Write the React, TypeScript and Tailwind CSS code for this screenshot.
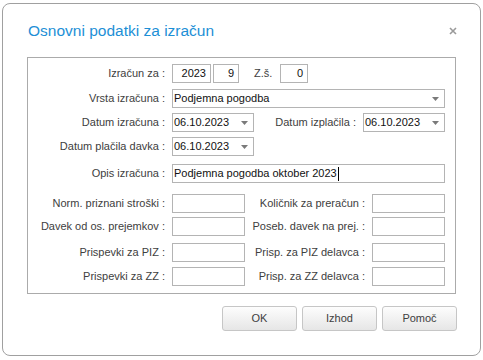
import React from "react";

const font = { fontFamily: '"Liberation Sans", Arial, sans-serif' };

function Arrow() {
  return (
    <svg width="7" height="4" viewBox="0 0 7 4" className="shrink-0">
      <path d="M0 0h7L3.5 4z" fill="#7a7a7a" />
    </svg>
  );
}

function Box(props: { w: string; value?: string; right?: boolean; caret?: boolean }) {
  return (
    <div
      className={`flex h-[19px] items-center border border-[#b4b4b4] bg-white px-[4px] text-[11px] text-[#111] ${props.w} ${props.right ? "justify-end" : "pl-[1px]"}`}
    >
      <span className="whitespace-nowrap">{props.value}</span>
      {props.caret && <span className="ml-[1px] h-[14px] w-[1px] bg-black" />}
    </div>
  );
}

function Select(props: { w: string; value: string }) {
  return (
    <div
      className={`flex h-[19px] items-center justify-between border border-[#b4b4b4] bg-white pl-[1px] pr-[5px] text-[11px] text-[#111] ${props.w}`}
    >
      <span className="whitespace-nowrap">{props.value}</span>
      <Arrow />
    </div>
  );
}

function Label(props: { children: React.ReactNode; w?: string }) {
  return (
    <div className={`${props.w ?? "w-[144px]"} shrink-0 whitespace-nowrap pr-[7px] text-right text-[11px] text-[#404040]`}>
      {props.children}
    </div>
  );
}

function Btn(props: { children: React.ReactNode }) {
  return (
    <button className="h-[25px] w-[75px] rounded-[3px] border border-[#c6c6c6] bg-gradient-to-b from-[#fdfdfd] to-[#e6e6e6] text-[11px] font-normal text-[#404040]">
      {props.children}
    </button>
  );
}

export default function App() {
  return (
    <div className="h-[360px] w-[483px] bg-white pl-[2px] pt-[3px]" style={font}>
      <div className="flex h-[353px] w-[479px] flex-col rounded-[8px] border border-[#a0a0a0] bg-white">
        <div className="flex h-[53px] items-center justify-between pl-[25px] pr-[23px]">
          <h1 className="text-[15.5px] font-light text-[#1d8fd6]">Osnovni podatki za izračun</h1>
          <svg width="8" height="8" viewBox="0 0 8 8">
            <path d="M1 1l6 6M7 1l-6 6" stroke="#9a9a9a" strokeWidth="1.6" />
          </svg>
        </div>

        <div className="ml-[24px] flex h-[237px] w-[429px] flex-col border border-[#ababab] pt-[6px]">
          <div className="flex items-center">
            <Label>Izračun za :</Label>
            <Box w="w-[39px]" value="2023" right />
            <div className="w-[2px]" />
            <Box w="w-[26px]" value="9" right />
            <span className="ml-[15px] w-[26px] text-[11px] text-[#404040]">Z.š.</span>
            <Box w="w-[28px]" value="0" right />
          </div>

          <div className="mt-[6px] flex items-center">
            <Label>Vrsta izračuna :</Label>
            <Select w="w-[273px]" value="Podjemna pogodba" />
          </div>

          <div className="mt-[5px] flex items-center">
            <Label>Datum izračuna :</Label>
            <Select w="w-[82px]" value="06.10.2023" />
            <Label w="w-[109px]">Datum izplačila :</Label>
            <Select w="w-[82px]" value="06.10.2023" />
          </div>

          <div className="mt-[5px] flex items-center">
            <Label>Datum plačila davka :</Label>
            <Select w="w-[82px]" value="06.10.2023" />
          </div>

          <div className="mt-[8px] flex items-center">
            <Label>Opis izračuna :</Label>
            <Box w="w-[273px]" value="Podjemna pogodba oktober 2023" caret />
          </div>

          <div className="mt-[11px] flex items-center">
            <Label>Norm. priznani stroški :</Label>
            <Box w="w-[73px]" />
            <Label w="w-[127px]">Količnik za preračun :</Label>
            <Box w="w-[73px]" />
          </div>

          <div className="mt-[4px] flex items-center">
            <Label>Davek od os. prejemkov :</Label>
            <Box w="w-[73px]" />
            <Label w="w-[127px]">Poseb. davek na prej. :</Label>
            <Box w="w-[73px]" />
          </div>

          <div className="mt-[7px] flex items-center">
            <Label>Prispevki za PIZ :</Label>
            <Box w="w-[73px]" />
            <Label w="w-[127px]">Prisp. za PIZ delavca :</Label>
            <Box w="w-[73px]" />
          </div>

          <div className="mt-[5px] flex items-center">
            <Label>Prispevki za ZZ :</Label>
            <Box w="w-[73px]" />
            <Label w="w-[127px]">Prisp. za ZZ delavca :</Label>
            <Box w="w-[73px]" />
          </div>
        </div>

        <div className="mt-[12px] flex justify-end gap-[5px] pr-[23px]">
          <Btn>OK</Btn>
          <Btn>Izhod</Btn>
          <Btn>Pomoč</Btn>
        </div>
      </div>
    </div>
  );
}
